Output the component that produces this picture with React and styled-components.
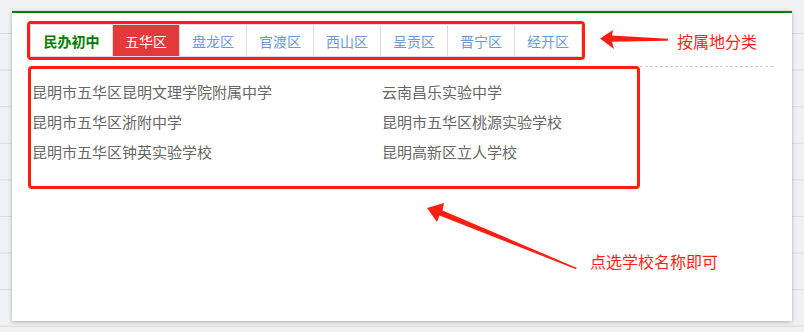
import React from 'react';
import styled, { createGlobalStyle } from 'styled-components';

const RED = '#ff1e14';

const GlobalStyle = createGlobalStyle`
  html, body {
    margin: 0;
    padding: 0;
  }
  body {
    width: 804px;
    height: 332px;
    overflow: hidden;
    background-color: #eff1f4;
    background-image: linear-gradient(to bottom, #d7dadf 1px, transparent 1px);
    background-size: 100% 36.6px;
    background-position: 0 33px;
    font-family: 'Liberation Sans', 'Noto Sans CJK SC', sans-serif;
  }
`;

const Page = styled.div`
  padding: 11px 12px 0 12px;
`;

const Panel = styled.div`
  position: relative;
  box-sizing: border-box;
  width: 780px;
  height: 310px;
  background: #fff;
  border-top: 2px solid #008000;
  box-shadow: 0 1px 4px rgba(0, 0, 0, 0.28);
  padding: 8px 0 0 0;
`;

const Header = styled.div`
  display: flex;
  align-items: center;
  padding-left: 15px;
  margin-bottom: 6px;
`;

const Frame = styled.div`
  border: 3px solid ${RED};
  border-radius: 4px;
`;

const TabGroup = styled.div`
  display: flex;
  border: 1px solid #dcdcdc;
  border-radius: 3px;
  overflow: hidden;
`;

const Tab = styled.div`
  box-sizing: border-box;
  width: ${(p) => (p.$title ? '81px' : '67px')};
  height: 31px;
  display: flex;
  align-items: center;
  justify-content: center;
  font-size: 14px;
  font-weight: ${(p) => (p.$title ? 700 : 400)};
  color: ${(p) => (p.$title ? '#008000' : p.$active ? '#fff' : '#6b98d8')};
  background: ${(p) => (p.$active ? '#e4393c' : '#fff')};
  border-left: ${(p) => (p.$title ? 'none' : '1px solid #dcdcdc')};
`;

const ArrowSvg = styled.svg`
  display: block;
  margin-left: 13px;
  margin-top: -3px;
`;

const Note = styled.span`
  font-size: 16px;
  color: ${RED};
  margin-left: 7px;
  white-space: nowrap;
`;

const Divider = styled.div`
  margin: 0 19px 0 18px;
  border-top: 1px dashed #cfcfcf;
`;

const SchoolBox = styled.div`
  box-sizing: border-box;
  width: 612px;
  height: 123px;
  margin: -1px 0 0 16px;
  border: 3px solid ${RED};
  border-radius: 4px;
  padding: 9px 0 0 1px;
  display: grid;
  grid-template-columns: 350px 1fr;
  grid-auto-rows: 30px;
  align-content: start;
`;

const School = styled.a`
  font-size: 15px;
  line-height: 30px;
  color: #666;
  text-decoration: none;
  white-space: nowrap;
  cursor: pointer;
`;

const Callout = styled.div`
  position: absolute;
  left: 412px;
  top: 187px;
  display: flex;
  align-items: flex-start;
  pointer-events: none;
`;

const CalloutNote = styled.span`
  font-size: 16px;
  color: ${RED};
  margin: 49px 0 0 0;
  white-space: nowrap;
`;

const districts = ['五华区', '盘龙区', '官渡区', '西山区', '呈贡区', '晋宁区', '经开区'];

const schools = [
  '昆明市五华区昆明文理学院附属中学',
  '云南昌乐实验中学',
  '昆明市五华区浙附中学',
  '昆明市五华区桃源实验学校',
  '昆明市五华区钟英实验学校',
  '昆明高新区立人学校',
];

const LeftArrow = () => (
  <ArrowSvg width="72" height="24" viewBox="0 0 72 24">
    <polygon
      points="2,11.5 15,3 14,8.6 70,11.8 70,13.8 14,14.8 16,22"
      fill={RED}
    />
  </ArrowSvg>
);

// long diagonal arrow pointing at the school list
const DiagArrow = () => (
  <svg width="166" height="72" viewBox="0 0 166 72" style={{ display: 'block' }}>
    <polygon
      points="3,8 20,3 18.5,10.5 153,68 151.5,69 15.5,15.5 13,22"
      fill={RED}
    />
  </svg>
);

const App = () => {
  return (
    <Page>
      <GlobalStyle />
      <Panel>
        <Header>
          <Frame>
            <TabGroup>
              <Tab $title>民办初中</Tab>
              {districts.map((d, i) => (
                <Tab key={d} $active={i === 0}>
                  {d}
                </Tab>
              ))}
            </TabGroup>
          </Frame>
          <LeftArrow />
          <Note>按属地分类</Note>
        </Header>
        <Divider />
        <SchoolBox>
          {schools.map((s) => (
            <School key={s}>{s}</School>
          ))}
        </SchoolBox>
        <Callout>
          <DiagArrow />
          <CalloutNote>点选学校名称即可</CalloutNote>
        </Callout>
      </Panel>
    </Page>
  );
};

export default App;
